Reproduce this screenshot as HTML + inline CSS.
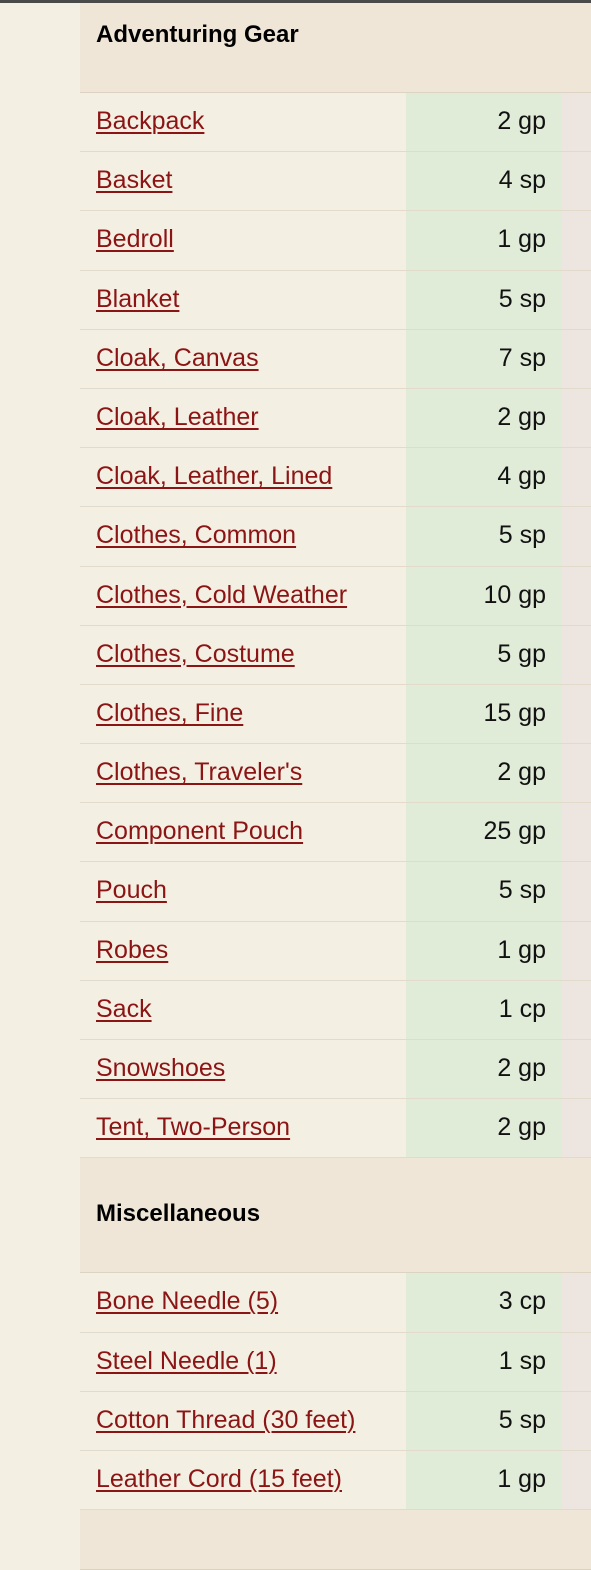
<!DOCTYPE html>
<html><head><style>
body{margin:0;width:591px;height:1524px;background:#f4efe3;font-family:"Liberation Sans",sans-serif;overflow:hidden;position:relative}
.top{position:absolute;left:0;top:0;width:591px;height:3px;background:#4a4a4a}
.wrap{position:absolute;left:80px;top:3px;width:511px}
.h{background:#efe6d8;font-weight:bold;font-size:24px;color:#000;padding-left:16px;box-sizing:border-box;border-bottom:1px solid #ddd3c2;position:relative}
.r{height:59.2px;position:relative;border-bottom:1px solid #e2dacb;box-sizing:border-box;background:#f4efe3}
.r .n{position:absolute;left:16px;top:-1px;line-height:58px;font-size:25px;color:#8b1414;text-decoration:underline;text-decoration-thickness:2px;text-underline-offset:3px}
.r .p{position:absolute;left:326px;width:156px;top:0;height:58.2px;background:#e0ebd8;text-align:right;box-sizing:border-box;padding-right:16px;line-height:57px;font-size:25px;color:#111}
.r .q{position:absolute;left:482px;width:29px;top:0;height:58.2px;background:#ede5e0}
</style></head><body>
<div class="top"></div>
<div class="wrap">
<div class="h" style="height:90px;padding-top:18px">Adventuring Gear</div>
<div class="r"><span class="n">Backpack</span><span class="p">2 gp</span><span class="q"></span></div>
<div class="r"><span class="n">Basket</span><span class="p">4 sp</span><span class="q"></span></div>
<div class="r"><span class="n">Bedroll</span><span class="p">1 gp</span><span class="q"></span></div>
<div class="r"><span class="n">Blanket</span><span class="p">5 sp</span><span class="q"></span></div>
<div class="r"><span class="n">Cloak, Canvas</span><span class="p">7 sp</span><span class="q"></span></div>
<div class="r"><span class="n">Cloak, Leather</span><span class="p">2 gp</span><span class="q"></span></div>
<div class="r"><span class="n">Cloak, Leather, Lined</span><span class="p">4 gp</span><span class="q"></span></div>
<div class="r"><span class="n">Clothes, Common</span><span class="p">5 sp</span><span class="q"></span></div>
<div class="r"><span class="n">Clothes, Cold Weather</span><span class="p">10 gp</span><span class="q"></span></div>
<div class="r"><span class="n">Clothes, Costume</span><span class="p">5 gp</span><span class="q"></span></div>
<div class="r"><span class="n">Clothes, Fine</span><span class="p">15 gp</span><span class="q"></span></div>
<div class="r"><span class="n">Clothes, Traveler's</span><span class="p">2 gp</span><span class="q"></span></div>
<div class="r"><span class="n">Component Pouch</span><span class="p">25 gp</span><span class="q"></span></div>
<div class="r"><span class="n">Pouch</span><span class="p">5 sp</span><span class="q"></span></div>
<div class="r"><span class="n">Robes</span><span class="p">1 gp</span><span class="q"></span></div>
<div class="r"><span class="n">Sack</span><span class="p">1 cp</span><span class="q"></span></div>
<div class="r"><span class="n">Snowshoes</span><span class="p">2 gp</span><span class="q"></span></div>
<div class="r"><span class="n">Tent, Two-Person</span><span class="p">2 gp</span><span class="q"></span></div>
<div class="h" style="height:115px;line-height:112px">Miscellaneous</div>
<div class="r"><span class="n">Bone Needle (5)</span><span class="p">3 cp</span><span class="q"></span></div>
<div class="r"><span class="n">Steel Needle (1)</span><span class="p">1 sp</span><span class="q"></span></div>
<div class="r"><span class="n">Cotton Thread (30 feet)</span><span class="p">5 sp</span><span class="q"></span></div>
<div class="r"><span class="n">Leather Cord (15 feet)</span><span class="p">1 gp</span><span class="q"></span></div>
<div class="h" style="height:60px"></div>
</div>
</body></html>
